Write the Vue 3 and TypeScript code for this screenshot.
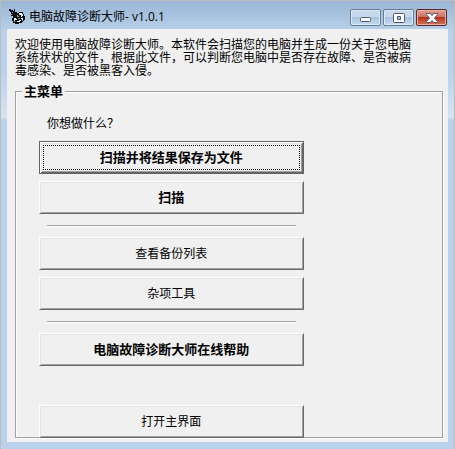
<script setup lang="ts">
import { ref } from 'vue'

interface MenuAction {
  id: string
  label: string
  primary?: boolean
}

const title = '电脑故障诊断大师- v1.0.1'
const groups: MenuAction[][] = [
  [
    { id: 'scan-save', label: '扫描并将结果保存为文件', primary: true },
    { id: 'scan', label: '扫描', primary: true },
  ],
  [
    { id: 'backups', label: '查看备份列表' },
    { id: 'tools', label: '杂项工具' },
  ],
  [{ id: 'help', label: '电脑故障诊断大师在线帮助', primary: true }],
]
const current = ref('scan-save')
</script>

<template>
  <div class="window">
    <header class="titlebar">
      <svg class="app-icon" viewBox="0 0 16 16" aria-hidden="true">
        <path d="M0 0h2v1h2v1h1V0h1v3h2v1h2V3h4v2h1v2h1v4h-1v1h-1v1h-1v1h-3v1H6v-1H4v-2H3V9h1V7H2V6h1V5H2V3H1V2H0z" fill="#101214" />
        <path d="M10 4h3v1h1v2h-1v1h-1V6h-2zM5 9h2v1h1v1H6v1H5zM8 12h2v-1h2v1h-1v1H8zM12 9h2v2h-1v-1h-1z" fill="#eef1f3" />
        <path d="M8 6h1v1h1v1H8zM9 9h2v1H9zM13 11h1v1h-1zM3 3h1v1H3zM5 12h1v1H5z" fill="#8d9296" />
      </svg>
      <h1 class="title">{{ title }}</h1>
      <div class="controls">
        <button type="button" class="control" aria-label="最小化">
          <svg viewBox="0 0 29 15" aria-hidden="true">
            <rect x="9.500" y="7.500" width="10" height="4" rx="1" fill="#fff" stroke="#535666" />
          </svg>
        </button>
        <button type="button" class="control" aria-label="最大化">
          <svg viewBox="0 0 29 15" aria-hidden="true">
            <path d="M10.500 3.500h9a1 1 0 0 1 1 1v7a1 1 0 0 1-1 1h-9a1 1 0 0 1-1-1v-7a1 1 0 0 1 1-1zM13.500 6.500v3h3v-3z" fill="#fff" fill-rule="evenodd" stroke="#535666" />
          </svg>
        </button>
        <button type="button" class="control close" aria-label="关闭">
          <svg viewBox="0 0 29 15" aria-hidden="true">
            <path d="M9.500 3.500h4l1.500 2 1.500-2h4v1l-3 3.500 3 3.500v1h-4l-1.500-2-1.500 2h-4v-1l3-3.500-3-3.500z" fill="#fff" stroke="#535666" stroke-linejoin="round" />
          </svg>
        </button>
      </div>
    </header>

    <main class="client">
      <p class="intro">
        欢迎使用电脑故障诊断大师。本软件会扫描您的电脑并生成一份关于您电脑系统状状的文件，根据此文件，可以判断您电脑中是否存在故障、是否被病毒感染、是否被黑客入侵。
      </p>
      <fieldset class="menu">
        <legend class="legend">主菜单</legend>
        <p class="question">你想做什么？</p>
        <div class="actions">
          <template v-for="(group, index) in groups" :key="index">
            <hr v-if="index > 0" class="rule" />
            <div class="group">
              <button
                v-for="action in group"
                :key="action.id"
                type="button"
                class="action"
                :class="{ primary: action.primary, current: current === action.id }"
                @click="current = action.id"
              >
                {{ action.label }}
              </button>
            </div>
          </template>
          <button
            type="button"
            class="action last"
            :class="{ current: current === 'main' }"
            @click="current = 'main'"
          >
            打开主界面
          </button>
        </div>
      </fieldset>
    </main>
  </div>
</template>

<style>
body {
  background: #b9d1ea;
}
</style>

<style scoped>
.window {
  box-sizing: border-box;
  display: flex;
  flex-direction: column;
  min-height: 100vh;
  padding: 0 6px 7px;
  border: 1px solid #bcbcbc;
  background: linear-gradient(#9ab6d3 0, #a9c4e0 16px, #b9d1ea 30px, #b9d1ea 70px, #d5e4f3 116px, #b9d1ea 119px);
  color: #000;
  font-family: "Noto Sans CJK SC", "Liberation Sans", sans-serif;
  font-size: 12px;
  line-height: 13px;
}

.titlebar {
  display: flex;
  align-items: center;
  height: 28px;
  padding: 0 1px 0 2px;
}

.app-icon {
  width: 16px;
  height: 16px;
  margin-top: 4px;
}

.title {
  flex: 1;
  margin: 4px 0 0 4px;
  font-family: "Open Sans", "Noto Sans CJK SC", sans-serif;
  font-size: 12px;
  font-weight: 400;
  line-height: 16px;
  white-space: nowrap;
}

.controls {
  display: flex;
  gap: 2px;
  margin-top: 5px;
}

.control {
  display: block;
  box-sizing: border-box;
  width: 31px;
  height: 17px;
  padding: 0;
  border: 1px solid #687d94;
  border-radius: 2px;
  background: linear-gradient(#c6d8eb 0 45%, #a9c3df 50%, #c5dbf0);
  box-shadow: inset 0 0 0 1px #dce8f4;
}

.control svg {
  display: block;
  width: 29px;
  height: 15px;
}

.close {
  border-color: #602428;
  background: linear-gradient(#dfa096 0, #cc7263 45%, #b8321f 50%, #d57655);
  box-shadow: inset 0 0 0 1px #e4b0a7;
}

.client {
  flex: 1;
  padding: 8px 5px 4px 8px;
  background: #f0f0f0;
}

.intro {
  max-width: 397px;
  margin: 0;
}

.menu {
  min-width: 0;
  margin: 8px 0 0;
  padding: 0 8px 0 23px;
  border: 1px solid #a0a0a0;
  box-shadow: 1px 1px 0 #fff, inset 1px 1px 0 #fff;
}

.legend {
  margin-left: -17px;
  padding: 0 2px;
  background: #f0f0f0;
  font-size: 13px;
  font-weight: 700;
  line-height: 14px;
}

.question {
  margin: 18px 8px 12px;
}

.actions {
  display: flex;
  flex-direction: column;
  width: 67%;
}

.group {
  display: flex;
  flex-direction: column;
  gap: 7px;
}

.action {
  box-sizing: border-box;
  height: 33px;
  padding: 0 0 2px;
  border: 1px solid;
  border-color: #fff #696969 #696969 #fff;
  border-radius: 0;
  outline: none;
  background: #f0f0f0;
  box-shadow: inset 1px 1px 0 #e3e3e3, inset -1px -1px 0 #a0a0a0;
  color: #000;
  font: inherit;
}

.action.primary {
  font-size: 13px;
  font-weight: 700;
}

.action.current {
  border-color: #646464;
  box-shadow: inset 1px 1px 0 #fff, inset -1px -1px 0 #696969, inset 2px 2px 0 #e3e3e3, inset -2px -2px 0 #a0a0a0;
  outline: 1px dotted #000;
  outline-offset: -5px;
}

.rule {
  height: 1px;
  margin: 11px 8px 10px;
  border: 0;
  border-top: 1px solid #a0a0a0;
  background: #fff;
}

.last {
  margin: 39px 0 -1px;
}
</style>
